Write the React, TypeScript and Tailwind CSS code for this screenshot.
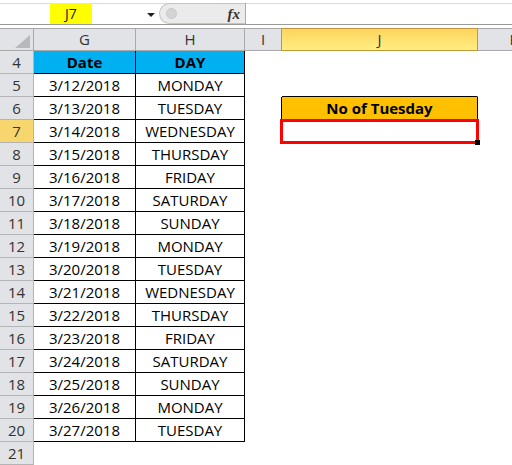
import React from "react";

const data: [string, string][] = [
  ["3/12/2018", "MONDAY"],
  ["3/13/2018", "TUESDAY"],
  ["3/14/2018", "WEDNESDAY"],
  ["3/15/2018", "THURSDAY"],
  ["3/16/2018", "FRIDAY"],
  ["3/17/2018", "SATURDAY"],
  ["3/18/2018", "SUNDAY"],
  ["3/19/2018", "MONDAY"],
  ["3/20/2018", "TUESDAY"],
  ["3/21/2018", "WEDNESDAY"],
  ["3/22/2018", "THURSDAY"],
  ["3/23/2018", "FRIDAY"],
  ["3/24/2018", "SATURDAY"],
  ["3/25/2018", "SUNDAY"],
  ["3/26/2018", "MONDAY"],
  ["3/27/2018", "TUESDAY"],
];

function RowHead({ n, selected }: { n: number; selected?: boolean }) {
  return (
    <div
      className={
        "w-[34px] shrink-0 border-r border-b border-[#b4b4b4] flex items-center justify-center text-[15px] text-[#333]" +
        (selected ? " bg-[#f8d66e]" : " bg-[#e1e3e7]")
      }
    >
      {n}
    </div>
  );
}

export default function App() {
  return (
    <div className="relative w-[512px] h-[465px] overflow-hidden bg-white font-['Open_Sans',sans-serif]">
      {/* Formula bar */}
      <div className="h-[25px] border-b border-[#9a9a9a] pt-[3px]">
        <div className="flex h-[21px] border-t border-[#dcdcdc]">
          <div className="w-[159px] shrink-0 flex items-stretch relative">
            <div className="ml-[50px] w-[42px] bg-[#ffff00] flex items-center justify-center text-[14px] text-[#222] -mt-px">
              J7
            </div>
            <div className="absolute left-[147px] top-[9px] w-0 h-0 border-l-[4px] border-r-[4px] border-t-[4px] border-l-transparent border-r-transparent border-t-[#222]" />
          </div>
          <div className="w-[86px] shrink-0 rounded-l-full bg-[#ebebeb] border border-r-0 border-[#c4c4c4] flex items-center relative -mt-px">
            <div className="ml-[6px] w-[11px] h-[11px] rounded-full bg-[#d4d4d4] border border-[#c8c8c8]" />
            <span className="absolute right-[5px] top-[0px] font-['Liberation_Serif',serif] italic font-bold text-[15px] text-[#333] leading-[20px]">
              fx
            </span>
          </div>
          <div className="flex-1 border-l border-[#aaaaaa] -mt-px" />
        </div>
      </div>
      <div className="h-[3px]" />
      {/* Column header row */}
      <div className="flex h-[23px] text-[15px] text-[#333]">
        <div className="w-[34px] shrink-0 border-t border-b border-r border-[#a9a9a9] bg-[#e1e3e7] relative">
          <svg className="absolute left-[15px] top-[6px]" width="15" height="13" viewBox="0 0 15 13">
            <polygon points="15,0 15,13 0,13" fill="#b6b8bb" />
          </svg>
        </div>
        <div className="w-[102px] shrink-0 border-t border-b border-r border-[#a9a9a9] bg-[#e1e3e7] flex items-center justify-center">G</div>
        <div className="w-[109px] shrink-0 border-t border-b border-r border-[#a9a9a9] bg-[#e1e3e7] flex items-center justify-center">H</div>
        <div className="w-[37px] shrink-0 border-t border-b border-r border-t-[#a9a9a9] border-b-[#a9a9a9] border-r-[#c2963a] bg-[#e1e3e7] flex items-center justify-center">I</div>
        <div className="w-[196px] shrink-0 border-t border-b border-r border-[#c2963a] bg-gradient-to-b from-[#fed45e] to-[#ffee80] flex items-center justify-center">J</div>
        <div className="w-[72px] shrink-0 border-t border-b border-[#a9a9a9] bg-[#e1e3e7] flex items-center justify-center">K</div>
      </div>
      {/* Row 4 header */}
      <div className="flex h-[23px] text-[15px] text-black">
        <RowHead n={4} />
        <div className="w-[102px] shrink-0 border-r border-b border-black bg-[#00b0f0] flex items-center justify-center font-bold">Date</div>
        <div className="w-[109px] shrink-0 border-r border-b border-black bg-[#00b0f0] flex items-center justify-center font-bold">DAY</div>
        <div className="flex-1" />
      </div>
      {data.map(([d, day], i) => {
        const rowNum = i + 5;
        return (
          <div key={rowNum} className="flex h-[23px] text-[15px] text-black">
            <RowHead n={rowNum} selected={rowNum === 7} />
            <div className="w-[102px] shrink-0 border-r border-b border-black flex items-center justify-center">{d}</div>
            <div className="w-[109px] shrink-0 border-r border-b border-black flex items-center justify-center">{day}</div>
            <div
              className={
                "w-[37px] shrink-0 border-r " + (rowNum === 6 ? "border-black" : "border-transparent")
              }
            />
            {rowNum === 6 ? (
              <div className="w-[196px] shrink-0 border-r border-b border-black bg-[#ffc000] flex items-center justify-center font-bold">
                No of Tuesday
              </div>
            ) : (
              <div
                className={
                  "w-[196px] shrink-0 border-r border-b " + (rowNum === 5 ? "border-b-black border-r-transparent" : "border-transparent")
                }
              />
            )}
            <div className="flex-1" />
          </div>
        );
      })}
      <div className="flex h-[23px] text-[15px]">
        <RowHead n={21} />
        <div className="flex-1" />
      </div>
      {/* Selection / red highlight */}
      <div className="absolute left-[280px] top-[119px] w-[199px] h-[25px] border-[3px] border-[#ff0000]" />
      <div className="absolute left-[475px] top-[140px] w-[5px] h-[5px] bg-black" />
    </div>
  );
}
